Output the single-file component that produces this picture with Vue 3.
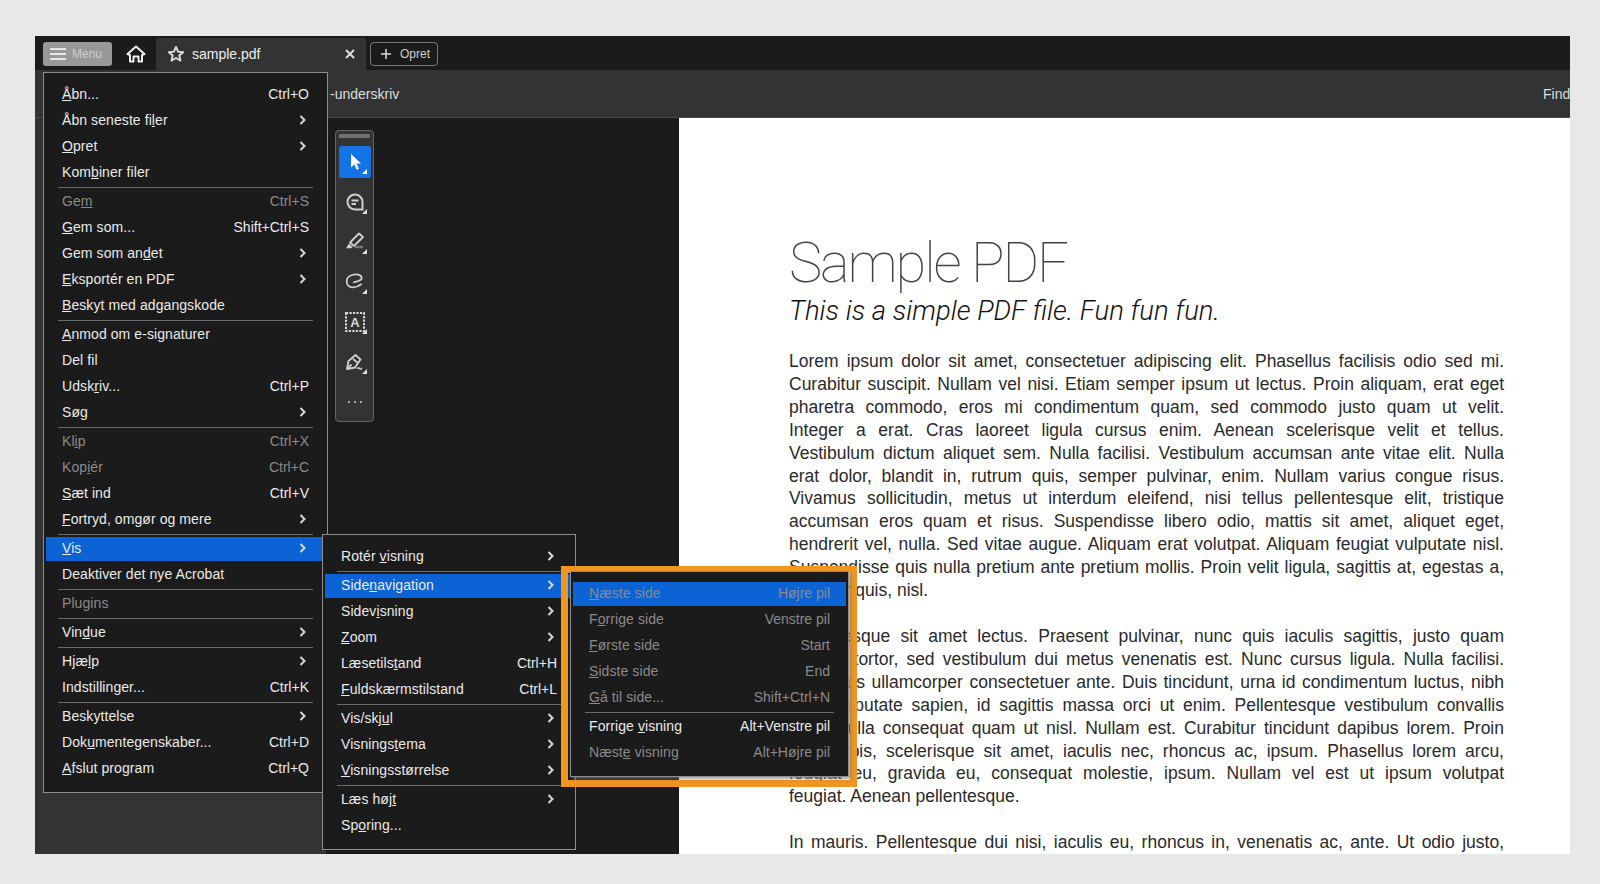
<script setup>
// menu rows: u = index of the underlined letter, key = shortcut, dim = disabled, sep = separator
const mainMenu = [
  { label: "Åbn...", u: 0, key: "Ctrl+O" },
  { label: "Åbn seneste filer", u: 14, arrow: true },
  { label: "Opret", u: 0, arrow: true },
  { label: "Kombiner filer", u: 3 },
  { sep: true },
  { label: "Gem", u: 2, key: "Ctrl+S", dim: true },
  { label: "Gem som...", u: 0, key: "Shift+Ctrl+S" },
  { label: "Gem som andet", u: 10, arrow: true },
  { label: "Eksportér en PDF", u: 0, arrow: true },
  { label: "Beskyt med adgangskode", u: 0 },
  { sep: true },
  { label: "Anmod om e-signaturer", u: 0 },
  { label: "Del fil" },
  { label: "Udskriv...", u: 4, key: "Ctrl+P" },
  { label: "Søg", arrow: true },
  { sep: true },
  { label: "Klip", u: 2, key: "Ctrl+X", dim: true },
  { label: "Kopiér", u: 3, key: "Ctrl+C", dim: true },
  { label: "Sæt ind", u: 0, key: "Ctrl+V" },
  { label: "Fortryd, omgør og mere", u: 0, arrow: true },
  { sep: true },
  { label: "Vis", u: 0, arrow: true, active: true },
  { label: "Deaktiver det nye Acrobat" },
  { sep: true },
  { label: "Plugins", dim: true },
  { sep: true },
  { label: "Vindue", u: 3, arrow: true },
  { sep: true },
  { label: "Hjælp", u: 3, arrow: true },
  { label: "Indstillinger...", key: "Ctrl+K" },
  { sep: true },
  { label: "Beskyttelse", arrow: true },
  { label: "Dokumentegenskaber...", u: 3, key: "Ctrl+D" },
  { label: "Afslut program", u: 0, key: "Ctrl+Q" },
];

const viewMenu = [
  { label: "Rotér visning", u: 6, arrow: true },
  { sep: true },
  { label: "Sidenavigation", u: 4, arrow: true, active: true },
  { label: "Sidevisning", u: 5, arrow: true },
  { label: "Zoom", u: 0, arrow: true },
  { label: "Læsetilstand", u: 8, key: "Ctrl+H" },
  { label: "Fuldskærmstilstand", u: 0, key: "Ctrl+L" },
  { sep: true },
  { label: "Vis/skjul", u: 7, arrow: true },
  { label: "Visningstema", u: 8, arrow: true },
  { label: "Visningsstørrelse", u: 0, arrow: true },
  { sep: true },
  { label: "Læs højt", u: 7, arrow: true },
  { label: "Sporing...", u: 2 },
];

const navMenu = [
  { label: "Næste side", u: 0, key: "Højre pil", dim: true, active: true },
  { label: "Forrige side", u: 1, key: "Venstre pil", dim: true },
  { label: "Første side", u: 0, key: "Start", dim: true },
  { label: "Sidste side", u: 0, key: "End", dim: true },
  { label: "Gå til side...", u: 0, key: "Shift+Ctrl+N", dim: true },
  { sep: true },
  { label: "Forrige visning", u: 8, key: "Alt+Venstre pil" },
  { label: "Næste visning", u: 4, key: "Alt+Højre pil", dim: true },
];

const menus = [
  { name: "menu-main", rows: mainMenu },
  { name: "menu-view", rows: viewMenu },
  { name: "menu-nav", rows: navMenu },
];

const paragraphs = [
  [
    "Lorem ipsum dolor sit amet, consectetuer adipiscing elit. Phasellus facilisis odio sed mi.",
    "Curabitur suscipit. Nullam vel nisi. Etiam semper ipsum ut lectus. Proin aliquam, erat eget",
    "pharetra commodo, eros mi condimentum quam, sed commodo justo quam ut velit.",
    "Integer a erat. Cras laoreet ligula cursus enim. Aenean scelerisque velit et tellus.",
    "Vestibulum dictum aliquet sem. Nulla facilisi. Vestibulum accumsan ante vitae elit. Nulla",
    "erat dolor, blandit in, rutrum quis, semper pulvinar, enim. Nullam varius congue risus.",
    "Vivamus sollicitudin, metus ut interdum eleifend, nisi tellus pellentesque elit, tristique",
    "accumsan eros quam et risus. Suspendisse libero odio, mattis sit amet, aliquet eget,",
    "hendrerit vel, nulla. Sed vitae augue. Aliquam erat volutpat. Aliquam feugiat vulputate nisl.",
    "Suspendisse quis nulla pretium ante pretium mollis. Proin velit ligula, sagittis at, egestas a,",
    "pulvinar quis, nisl.",
  ],
  [
    "Pellentesque sit amet lectus. Praesent pulvinar, nunc quis iaculis sagittis, justo quam",
    "lobortis tortor, sed vestibulum dui metus venenatis est. Nunc cursus ligula. Nulla facilisi.",
    "Phasellus ullamcorper consectetuer ante. Duis tincidunt, urna id condimentum luctus, nibh",
    "ante vulputate sapien, id sagittis massa orci ut enim. Pellentesque vestibulum convallis",
    "sem. Nulla consequat quam ut nisl. Nullam est. Curabitur tincidunt dapibus lorem. Proin",
    "velit turpis, scelerisque sit amet, iaculis nec, rhoncus ac, ipsum. Phasellus lorem arcu,",
    "feugiat eu, gravida eu, consequat molestie, ipsum. Nullam vel est ut ipsum volutpat",
    "feugiat. Aenean pellentesque.",
  ],
  ["In mauris. Pellentesque dui nisi, iaculis eu, rhoncus in, venenatis ac, ante. Ut odio justo,"],
];

function isLast(para, i) {
  return i === para.length - 1 && para.length > 1;
}
</script>

<template>
  <div class="frame">
    <!-- fane-linje -->
    <div class="tabbar">
      <button class="menu-btn">
        <svg width="16" height="14" viewBox="0 0 16 14"><path d="M0 2h16M0 7h16M0 12h16" stroke="#e6e6e6" stroke-width="2" /></svg>
        <span>Menu</span>
      </button>
      <svg class="home" width="20" height="20" viewBox="0 0 20 20" fill="none" stroke="#eee" stroke-width="2" stroke-linejoin="round">
        <path d="M1.500 10 10 2.500l8.500 7.500-2.500 1v6.500h-3.500v-5h-5v5H4V11z" />
      </svg>
      <div class="tab">
        <svg width="18" height="18" viewBox="0 0 18 18" fill="none" stroke="#d8d8d8" stroke-width="2" stroke-linejoin="round">
          <path d="M9 2l2.100 4.700 5.100.5-3.900 3.400 1.200 5L9 13l-4.500 2.600 1.200-5-3.900-3.400 5.100-.5z" />
        </svg>
        <span class="tab-name">sample.pdf</span>
        <svg class="tab-x" width="10" height="10" viewBox="0 0 10 10"><path d="M1 1l8 8M9 1l-8 8" stroke="#ddd" stroke-width="2" /></svg>
      </div>
      <button class="new-btn">
        <svg width="12" height="12" viewBox="0 0 12 12"><path d="M6 1v10M1 6h10" stroke="#ddd" stroke-width="1.500" /></svg>
        <span>Opret</span>
      </button>
    </div>

    <div class="toolbar">
      <span class="sign">-underskriv</span>
      <span class="find">Find</span>
    </div>

    <div class="workspace">
      <div class="rail"></div>

      <div class="dark">
        <div class="tools">
          <div class="grip"></div>
          <div class="tool tool-on">
            <svg width="32" height="32" viewBox="0 0 32 32">
              <path d="M12 8v13.500l3.300-3 2.400 5.300 2.300-1-2.400-5.200h4.400z" fill="#fff" />
              <path d="M28 23v5h-5z" fill="#fff" />
            </svg>
          </div>
          <div class="tool">
            <svg width="32" height="32" viewBox="0 0 32 32" fill="none" stroke="#cfcfcf" stroke-width="2">
              <path d="M16 8.500a7.500 7.500 0 1 0 0 15h7.500V16A7.500 7.500 0 0 0 16 8.500z" />
              <path d="M12.500 14.500h7M12.500 18h4.500" />
              <path d="M28 23v5h-5z" fill="#e0e0e0" stroke="none" />
            </svg>
          </div>
          <div class="tool">
            <svg width="32" height="32" viewBox="0 0 32 32" fill="none" stroke="#cfcfcf" stroke-width="1.800" stroke-linejoin="round">
              <path d="M20 7.500 24 11l-9 9-4-3.500z" />
              <path d="M10 17.500l3.500 3.500-1.500 1.300H7z" fill="#cfcfcf" stroke="none" />
              <path d="M15.500 21h8.500" stroke="#777" stroke-width="2.500" />
              <path d="M28 23v5h-5z" fill="#e0e0e0" stroke="none" />
            </svg>
          </div>
          <div class="tool">
            <svg width="32" height="32" viewBox="0 0 32 32" fill="none" stroke="#cfcfcf" stroke-width="1.800">
              <path d="M14 16.500C17 15.500 23 15 22.700 12 22.300 8.500 17 7.800 13 9 9.500 10 7.500 13 7.700 16 8 20 11.500 21.300 14 21.300c3.500 0 6-1.300 8.700-3.300" />
              <path d="M28 23v5h-5z" fill="#e0e0e0" stroke="none" />
            </svg>
          </div>
          <div class="tool">
            <svg width="32" height="32" viewBox="0 0 32 32" fill="none" stroke="#d8d8d8">
              <rect x="7" y="7" width="18" height="18" stroke-width="2" stroke-dasharray="2.200 1.300" />
              <text x="16" y="21" text-anchor="middle" class="tool-a">A</text>
              <path d="M28 23v5h-5z" fill="#e0e0e0" stroke="none" />
            </svg>
          </div>
          <div class="tool">
            <svg width="32" height="32" viewBox="0 0 32 32" fill="none" stroke="#cfcfcf" stroke-width="1.800" stroke-linejoin="round">
              <path d="M8 23l1.500-8 7-6 5 4.500-5.500 8z" />
              <path d="M8 23l4.500-4.500M14 13l5 4" />
              <path d="M18 23c1-2 2-1.500 2.500-.5s1.500.8 2.500-.5" stroke-width="1.500" />
              <path d="M28 23v5h-5z" fill="#e0e0e0" stroke="none" />
            </svg>
          </div>
          <div class="tool tool-dots">
            <i></i><i></i><i></i>
          </div>
        </div>
      </div>

      <div class="page">
        <h1 class="title">Sample PDF</h1>
        <h2 class="subtitle">This is a simple PDF file. Fun fun fun.</h2>
        <p v-for="(para, p) in paragraphs" :key="p" class="para">
          <span
            v-for="(line, i) in para"
            :key="i"
            class="line"
            :class="{ 'line-end': isLast(para, i) }"
          >{{ line }}</span>
        </p>
      </div>
    </div>

    <!-- menuer ligger oven på alt andet -->
    <div v-for="menu in menus" :key="menu.name" class="menu" :class="menu.name">
      <template v-for="(row, i) in menu.rows" :key="i">
        <div v-if="row.sep" class="sep"></div>
        <div v-else class="row" :class="{ dim: row.dim, active: row.active }">
          <span class="label">
            <template v-if="row.u !== undefined">{{ row.label.slice(0, row.u) }}<u>{{ row.label[row.u] }}</u>{{ row.label.slice(row.u + 1) }}</template>
            <template v-else>{{ row.label }}</template>
          </span>
          <span v-if="row.key" class="key">{{ row.key }}</span>
          <svg v-if="row.arrow" class="arrow" width="7" height="10" viewBox="0 0 7 10" fill="none">
            <path d="M1.500 1l4 4-4 4" stroke="#d8d8d8" stroke-width="2" />
          </svg>
        </div>
      </template>
    </div>

    <div class="callout"></div>
  </div>
</template>

<style scoped>
.frame {
  position: relative;
  width: 1535px;
  height: 818px;
  margin: 36px 0 0 35px;
  overflow: hidden;
  display: flex;
  flex-direction: column;
  background: #1b1b1b;
  font-family: "Liberation Sans", Arial, sans-serif;
  font-size: 14px;
}

.tabbar {
  height: 34px;
  flex: none;
  box-sizing: border-box;
  display: flex;
  align-items: center;
  background: #1b1b1b;
  padding: 2px 0 0 8px;
}

.menu-btn {
  width: 69px;
  height: 24px;
  display: flex;
  align-items: center;
  gap: 6px;
  padding: 0 0 0 7px;
  border: 0;
  border-radius: 3px;
  background: #989898;
  color: #cdcdcd;
  font: 12px "Liberation Sans", Arial, sans-serif;
}

.home {
  margin-left: 14px;
  margin-right: 10px;
  flex: none;
}

.tab {
  width: 210px;
  height: 32px;
  align-self: flex-end;
  display: flex;
  align-items: center;
  padding: 0 11px;
  box-sizing: border-box;
  background: #333;
  border-radius: 3px 3px 0 0;
  color: #eee;
}

.tab-name {
  margin-left: 7px;
}

.tab-x {
  margin-left: auto;
}

.new-btn {
  width: 68px;
  height: 24px;
  margin-left: 4px;
  display: flex;
  align-items: center;
  gap: 8px;
  padding: 0 0 0 9px;
  background: transparent;
  border: 1px solid #777;
  border-radius: 4px;
  color: #d0d0d0;
  font: 12px "Liberation Sans", Arial, sans-serif;
}

.toolbar {
  height: 48px;
  flex: none;
  box-sizing: border-box;
  display: flex;
  align-items: center;
  justify-content: space-between;
  padding-left: 295px;
  background: #333;
  border-bottom: 1px solid #484848;
  color: #ddd;
}

.find {
  width: 27px;
  overflow: hidden;
  white-space: nowrap;
}

.workspace {
  flex: 1;
  display: flex;
  min-height: 0;
}

.rail {
  width: 291px;
  flex: none;
  background: #333;
}

.dark {
  width: 353px;
  flex: none;
  box-sizing: border-box;
  padding: 12px 0 0 9px;
  background: #1b1b1b;
}

.tools {
  width: 39px;
  height: 292px;
  box-sizing: border-box;
  padding: 3px 3px 0;
  display: flex;
  flex-direction: column;
  gap: 8px;
  background: #333;
  border: 1px solid #666;
  border-radius: 4px;
}

.grip {
  height: 4px;
  background: #707070;
  border-radius: 1px;
}

.tool {
  width: 32px;
  height: 32px;
  flex: none;
}

.tool svg {
  display: block;
}

.tool-on {
  background: #1473e6;
  border-radius: 2px;
}

.tool-a {
  font: bold 13px "Liberation Sans", Arial, sans-serif;
  fill: #d8d8d8;
  stroke: none;
}

.tool-dots {
  display: flex;
  align-items: center;
  justify-content: center;
  gap: 4px;
}

.tool-dots i {
  width: 2px;
  height: 2px;
  background: #aaa;
}

.page {
  flex: 1;
  min-width: 0;
  box-sizing: border-box;
  padding: 114px 66px 0 110px;
  background: #fff;
  color: #2a2a2a;
  overflow: hidden;
}

.title {
  margin: 0;
  font: 100 56px/63px Roboto, "Liberation Sans", sans-serif;
  color: #444;
  letter-spacing: -2.100px;
  white-space: nowrap;
}

.subtitle {
  margin: 0;
  font: italic 300 27.500px/32px Roboto, "Liberation Sans", sans-serif;
  color: #111;
  white-space: nowrap;
}

.para {
  margin: 23px 0 23px;
  font-size: 17.500px;
  line-height: 22.900px;
}

.para + .para {
  margin-top: 0;
}

.line {
  display: block;
  white-space: normal;
  text-align: justify;
  text-align-last: justify;
}

.line-end {
  text-align-last: left;
}

.menu {
  position: absolute;
  box-sizing: border-box;
  padding: 8px 2px 11px;
  background: #1b1b1b;
  border: 1px solid #8e8e8e;
  color: #eaeaea;
}

.menu-main {
  left: 8px;
  top: 36px;
  width: 285px;
}

.menu-view {
  left: 287px;
  top: 498px;
  width: 254px;
}

.menu-nav {
  left: 535px;
  top: 535px;
  width: 279px;
  z-index: 2;
  box-shadow: 2px 2px 3px rgba(120, 120, 120, 0.7);
}

.row {
  height: 26px;
  box-sizing: border-box;
  display: flex;
  align-items: center;
  padding: 0 16px;
}

.label {
  letter-spacing: 0.08px;
}

.row.active {
  background: #0b63d6;
  background-clip: content-box;
  padding: 2px 0 0;
  background-origin: padding-box;
}

.row.active .label {
  padding-left: 16px;
  margin-top: -2px;
}

.row.active .arrow {
  margin-right: 19px;
  margin-top: -2px;
}

.row.active .key {
  margin-right: 16px;
  margin-top: -2px;
}

.dim {
  color: #8a8a8a;
}

.key {
  margin-left: auto;
}

.arrow {
  margin-left: auto;
  margin-right: 3px;
}

.sep {
  height: 3px;
  box-sizing: border-box;
  margin: 0 12px;
  border-bottom: 1px solid #6a6a6a;
}

.callout {
  position: absolute;
  left: 526px;
  top: 530px;
  width: 296px;
  height: 221px;
  box-sizing: border-box;
  border: 7px solid #f0951f;
  z-index: 1;
}
</style>

<style>
body {
  background: #e8e8e8;
}
</style>
